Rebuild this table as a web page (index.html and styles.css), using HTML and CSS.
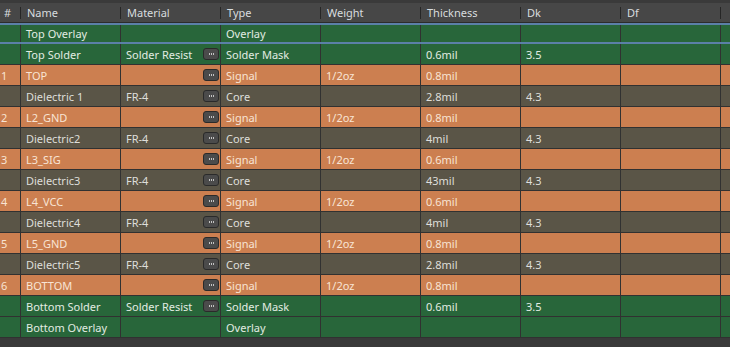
FILE: index.html
```html
<!DOCTYPE html>
<html>
<head>
<meta charset="utf-8">
<link rel="stylesheet" href="styles.css">
</head>
<body>
<div class="stack">
  <div class="head">
    <div class="hc">#</div>
    <div class="hc sep">Name</div>
    <div class="hc sep">Material</div>
    <div class="hc sep">Type</div>
    <div class="hc sep">Weight</div>
    <div class="hc sep">Thickness</div>
    <div class="hc sep">Dk</div>
    <div class="hc sep">Df</div>
    <div class="hc sep"></div>
  </div>

  <div class="row green selected">
    <div class="c"></div><div class="c">Top Overlay</div><div class="c"></div><div class="c">Overlay</div><div class="c"></div><div class="c"></div><div class="c"></div><div class="c"></div><div class="c"></div>
  </div>
  <div class="row green">
    <div class="c"></div><div class="c">Top Solder</div><div class="c mat">Solder Resist<span class="btn"><svg width="5" height="2" viewBox="0 0 5 2"><rect x="0" y="0" width="1" height="2"/><rect x="2" y="0" width="1" height="2"/><rect x="4" y="0" width="1" height="2"/></svg></span></div><div class="c">Solder Mask</div><div class="c"></div><div class="c">0.6mil</div><div class="c">3.5</div><div class="c"></div><div class="c"></div>
  </div>
  <div class="row cu">
    <div class="c num">1</div><div class="c">TOP</div><div class="c mat"><span class="btn"><svg width="5" height="2" viewBox="0 0 5 2"><rect x="0" y="0" width="1" height="2"/><rect x="2" y="0" width="1" height="2"/><rect x="4" y="0" width="1" height="2"/></svg></span></div><div class="c">Signal</div><div class="c">1/2oz</div><div class="c">0.8mil</div><div class="c"></div><div class="c"></div><div class="c"></div>
  </div>
  <div class="row diel">
    <div class="c"></div><div class="c">Dielectric 1</div><div class="c mat">FR-4<span class="btn"><svg width="5" height="2" viewBox="0 0 5 2"><rect x="0" y="0" width="1" height="2"/><rect x="2" y="0" width="1" height="2"/><rect x="4" y="0" width="1" height="2"/></svg></span></div><div class="c">Core</div><div class="c"></div><div class="c">2.8mil</div><div class="c">4.3</div><div class="c"></div><div class="c"></div>
  </div>
  <div class="row cu">
    <div class="c num">2</div><div class="c">L2_GND</div><div class="c mat"><span class="btn"><svg width="5" height="2" viewBox="0 0 5 2"><rect x="0" y="0" width="1" height="2"/><rect x="2" y="0" width="1" height="2"/><rect x="4" y="0" width="1" height="2"/></svg></span></div><div class="c">Signal</div><div class="c">1/2oz</div><div class="c">0.8mil</div><div class="c"></div><div class="c"></div><div class="c"></div>
  </div>
  <div class="row diel">
    <div class="c"></div><div class="c">Dielectric2</div><div class="c mat">FR-4<span class="btn"><svg width="5" height="2" viewBox="0 0 5 2"><rect x="0" y="0" width="1" height="2"/><rect x="2" y="0" width="1" height="2"/><rect x="4" y="0" width="1" height="2"/></svg></span></div><div class="c">Core</div><div class="c"></div><div class="c">4mil</div><div class="c">4.3</div><div class="c"></div><div class="c"></div>
  </div>
  <div class="row cu">
    <div class="c num">3</div><div class="c">L3_SIG</div><div class="c mat"><span class="btn"><svg width="5" height="2" viewBox="0 0 5 2"><rect x="0" y="0" width="1" height="2"/><rect x="2" y="0" width="1" height="2"/><rect x="4" y="0" width="1" height="2"/></svg></span></div><div class="c">Signal</div><div class="c">1/2oz</div><div class="c">0.6mil</div><div class="c"></div><div class="c"></div><div class="c"></div>
  </div>
  <div class="row diel">
    <div class="c"></div><div class="c">Dielectric3</div><div class="c mat">FR-4<span class="btn"><svg width="5" height="2" viewBox="0 0 5 2"><rect x="0" y="0" width="1" height="2"/><rect x="2" y="0" width="1" height="2"/><rect x="4" y="0" width="1" height="2"/></svg></span></div><div class="c">Core</div><div class="c"></div><div class="c">43mil</div><div class="c">4.3</div><div class="c"></div><div class="c"></div>
  </div>
  <div class="row cu">
    <div class="c num">4</div><div class="c">L4_VCC</div><div class="c mat"><span class="btn"><svg width="5" height="2" viewBox="0 0 5 2"><rect x="0" y="0" width="1" height="2"/><rect x="2" y="0" width="1" height="2"/><rect x="4" y="0" width="1" height="2"/></svg></span></div><div class="c">Signal</div><div class="c">1/2oz</div><div class="c">0.6mil</div><div class="c"></div><div class="c"></div><div class="c"></div>
  </div>
  <div class="row diel">
    <div class="c"></div><div class="c">Dielectric4</div><div class="c mat">FR-4<span class="btn"><svg width="5" height="2" viewBox="0 0 5 2"><rect x="0" y="0" width="1" height="2"/><rect x="2" y="0" width="1" height="2"/><rect x="4" y="0" width="1" height="2"/></svg></span></div><div class="c">Core</div><div class="c"></div><div class="c">4mil</div><div class="c">4.3</div><div class="c"></div><div class="c"></div>
  </div>
  <div class="row cu">
    <div class="c num">5</div><div class="c">L5_GND</div><div class="c mat"><span class="btn"><svg width="5" height="2" viewBox="0 0 5 2"><rect x="0" y="0" width="1" height="2"/><rect x="2" y="0" width="1" height="2"/><rect x="4" y="0" width="1" height="2"/></svg></span></div><div class="c">Signal</div><div class="c">1/2oz</div><div class="c">0.8mil</div><div class="c"></div><div class="c"></div><div class="c"></div>
  </div>
  <div class="row diel">
    <div class="c"></div><div class="c">Dielectric5</div><div class="c mat">FR-4<span class="btn"><svg width="5" height="2" viewBox="0 0 5 2"><rect x="0" y="0" width="1" height="2"/><rect x="2" y="0" width="1" height="2"/><rect x="4" y="0" width="1" height="2"/></svg></span></div><div class="c">Core</div><div class="c"></div><div class="c">2.8mil</div><div class="c">4.3</div><div class="c"></div><div class="c"></div>
  </div>
  <div class="row cu">
    <div class="c num">6</div><div class="c">BOTTOM</div><div class="c mat"><span class="btn"><svg width="5" height="2" viewBox="0 0 5 2"><rect x="0" y="0" width="1" height="2"/><rect x="2" y="0" width="1" height="2"/><rect x="4" y="0" width="1" height="2"/></svg></span></div><div class="c">Signal</div><div class="c">1/2oz</div><div class="c">0.8mil</div><div class="c"></div><div class="c"></div><div class="c"></div>
  </div>
  <div class="row green">
    <div class="c"></div><div class="c">Bottom Solder</div><div class="c mat">Solder Resist<span class="btn"><svg width="5" height="2" viewBox="0 0 5 2"><rect x="0" y="0" width="1" height="2"/><rect x="2" y="0" width="1" height="2"/><rect x="4" y="0" width="1" height="2"/></svg></span></div><div class="c">Solder Mask</div><div class="c"></div><div class="c">0.6mil</div><div class="c">3.5</div><div class="c"></div><div class="c"></div>
  </div>
  <div class="row green">
    <div class="c"></div><div class="c">Bottom Overlay</div><div class="c"></div><div class="c">Overlay</div><div class="c"></div><div class="c"></div><div class="c"></div><div class="c"></div><div class="c"></div>
  </div>
</div>
</body>
</html>
```

FILE: styles.css
```css
html, body {
  margin: 0;
  padding: 0;
  background: #3a3a3a;
  font-family: "Noto Sans", "DejaVu Sans", sans-serif;
  font-size: 11px;
  width: 730px;
  height: 347px;
  overflow: hidden;
}

.stack {
  padding-top: 3px;
}

.head,
.row {
  display: grid;
  grid-template-columns: 20px repeat(7, 100px) 10px;
}

.head {
  height: 19px;
  background: #474747;
  border-bottom: 1px solid #2c2c2c;
  color: #d8dcdf;
}

.hc {
  display: flex;
  align-items: center;
  padding-left: 4px;
  white-space: nowrap;
  overflow: hidden;
}

.hc.sep {
  padding-left: 7px;
  background-image: linear-gradient(#262626, #262626);
  background-repeat: no-repeat;
  background-size: 1px 12px;
  background-position: 0 4px;
}

.row {
  height: 21px;
  box-sizing: border-box;
  border-bottom: 1px solid #313131;
}

.row.selected {
  border-top: 2px solid #5b80a8;
  border-bottom: 2px solid #5b80a8;
}

.green { background: #28663a; color: #e2ece2; }
.cu { background: #cc7f50; color: #f8e4d4; }
.diel { background: #5a5547; color: #dededa; }

.c {
  display: flex;
  align-items: center;
  padding-left: 5px;
  border-left: 1px solid #313131;
  white-space: nowrap;
  overflow: hidden;
}

.c:first-child {
  border-left: none;
  padding-left: 1px;
}

.mat {
  padding-right: 1px;
}

.btn {
  margin-left: auto;
  width: 14px;
  height: 10px;
  border: 1px solid #2a2a2a;
  border-radius: 3px;
  background: #4b4b4b;
  display: flex;
  align-items: center;
  justify-content: center;
}

.btn svg {
  fill: #c4c4c4;
  display: block;
}
```
